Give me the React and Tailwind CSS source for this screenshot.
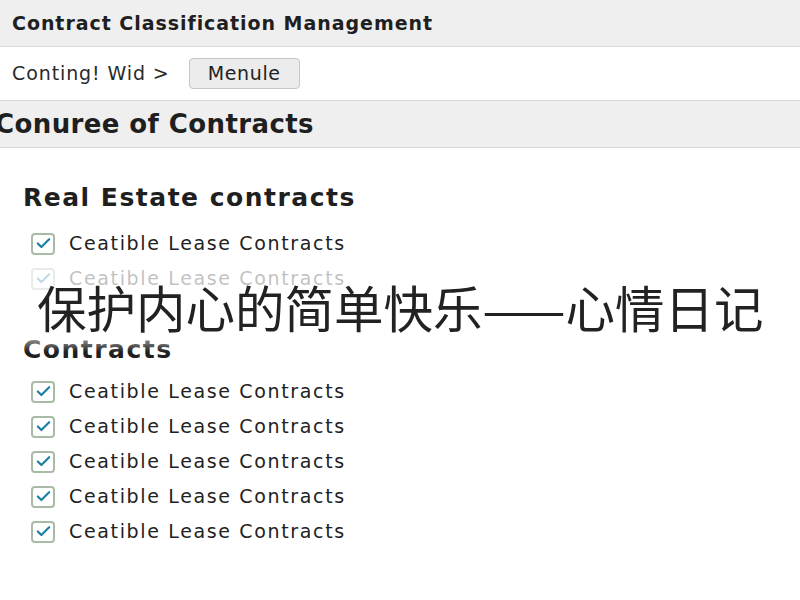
import { Check } from 'lucide-react';

const realEstate = [{ label: 'Ceatible Lease Contracts' }, { label: 'Ceatible Lease Contracts' }];
const contracts = Array.from({ length: 5 }, () => ({ label: 'Ceatible Lease Contracts' }));

function CheckRow({ label }) {
    return (
        <div className="h-[35px] flex items-center gap-[14px] pl-[31px]">
            <span className="w-[24px] h-[22px] rounded-[4px] border-2 border-[#a9bba6] bg-white flex items-center justify-center">
                <Check className="w-[17px] h-[17px] text-[#1b7ea3]" strokeWidth={3} />
            </span>
            <span className="text-[19px] tracking-[1.65px] text-[#222]">{label}</span>
        </div>
    );
}

export default function App() {
    return (
        <div className="relative w-[800px] h-[600px] bg-white overflow-hidden font-['DejaVu_Sans',sans-serif] text-[#1f1f1f]">
            {/* Window title */}
            <div className="h-[47px] bg-[#efefef] border-b border-[#d9d9d9] flex items-center px-[12px]">
                <span className="text-[19px] tracking-[0.95px] font-bold">Contract Classification Management</span>
            </div>

            {/* Breadcrumb */}
            <div className="h-[53px] flex items-center pl-[12px] gap-[19px]">
                <span className="text-[19px] tracking-[0.9px] text-[#2a2a2a]">Conting! Wid &gt;</span>
                <button className="h-[31px] w-[111px] rounded-[4px] border border-[#c6c6c6] bg-[#ececec] text-[19px] tracking-[0.6px] text-[#222]">
                    Menule
                </button>
            </div>

            {/* Section bar */}
            <div className="h-[48px] bg-[#efefef] border-y border-[#d6d6d6] flex items-center">
                <span className="ml-[-5px] text-[26px] tracking-[0.4px] font-bold">Conuree of Contracts</span>
            </div>

            <div className="pt-[34px] pl-[23px]">
                <h2 className="text-[25px] leading-[32px] tracking-[1.5px] font-bold">Real Estate contracts</h2>
            </div>
            <div className="mt-[12px]">
                {realEstate.map((r, i) => (
                    <CheckRow key={i} label={r.label} />
                ))}
            </div>

            <div className="mt-[38px] pl-[23px]">
                <h2 className="text-[25px] leading-[32px] tracking-[1.5px] font-bold">Contracts</h2>
            </div>
            <div className="mt-[8px]">
                {contracts.map((r, i) => (
                    <CheckRow key={i} label={r.label} />
                ))}
            </div>

            {/* Caption over the list */}
            <div className="absolute left-0 top-[262px] w-full h-[90px] bg-[linear-gradient(to_bottom,rgba(255,255,255,0.72)_80%,rgba(255,255,255,0))]" />
            <div className="absolute left-[37px] top-[279px] h-[56px] flex items-center">
                <span className="text-[49.5px] leading-none text-[#222] font-['Noto_Sans_CJK_SC',sans-serif] whitespace-nowrap">
                    保护内心的简单快乐——心情日记
                </span>
            </div>
        </div>
    );
}
